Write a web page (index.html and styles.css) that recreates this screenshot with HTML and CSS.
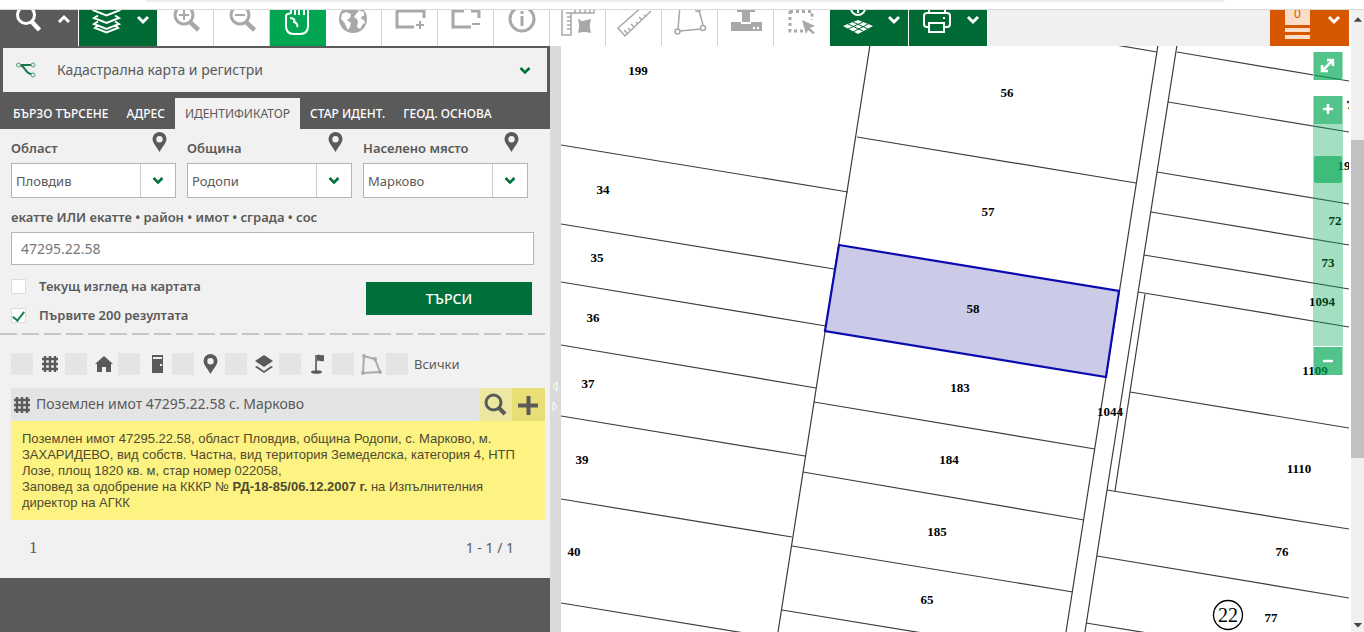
FILE: index.html
```html
<!DOCTYPE html>
<html lang="bg">
<head>
<meta charset="utf-8">
<meta name="viewport" content="width=device-width, initial-scale=1">
<title>Кадастрална карта и регистри</title>
<link rel="stylesheet" href="styles.css">
</head>
<body>
<svg class="defs" aria-hidden="true">
  <symbol id="pin" viewBox="0 0 14 20"><path fill-rule="evenodd" d="M7 0a7 7 0 0 1 7 7c0 4-4.500 8-7 13C4.500 15 0 11 0 7a7 7 0 0 1 7-7zm0 4a3.200 3.200 0 1 0 0 6.400A3.200 3.200 0 0 0 7 4z"/></symbol>
  <symbol id="down" viewBox="0 0 12 9"><path d="M1.500 2 6 6.500 10.500 2" fill="none" stroke="currentColor" stroke-width="2.600"/></symbol>
  <symbol id="hash" viewBox="0 0 16 16"><path d="M3 0v16M8 0v16M13 0v16M0 3h16M0 8h16M0 13h16" stroke="currentColor" stroke-width="2.400" fill="none"/></symbol>
</svg>
<div class="strip"><div class="strip-bar"></div></div>
<div class="app">
  <header class="toolbar">
    <button class="tool wide dark" aria-label="Търсене"><svg viewBox="0 0 78 36"><circle cx="26" cy="5" r="8.500" class="s3"/><path d="m32 12 7.500 8" stroke-width="4.500"/><path d="m59 12 5-5 5 5" class="s3"/></svg></button>
    <button class="tool wide green" aria-label="Слоеве"><svg viewBox="0 0 78 36"><path class="s2" d="M19-2l-4 2.500 12.500 5L40 .5 36-2M19 5.500l-4 2.500 12.500 5L40 8l-4-2.500M19 11.500l-4 2.500 12.500 5L40 14l-4-2.500M19 15.500l-3 2.500 11.500 4.500L39 18l-3-2.500"/><path d="m59 7 5 5 5-5" class="s3"/></svg></button>
    <button class="tool" aria-label="Увеличаване"><svg viewBox="0 0 56 36"><circle cx="26" cy="5" r="9" class="s3"/><path d="m32 12 8.500 8" stroke-width="4.500"/><path d="M21 5h10M26 0v10" class="s2"/></svg></button>
    <button class="tool" aria-label="Намаляване"><svg viewBox="0 0 56 36"><circle cx="26" cy="5" r="9" class="s3"/><path d="m32 12 8.500 8" stroke-width="4.500"/><path d="M21 5h10" class="s2"/></svg></button>
    <button class="tool active" aria-label="Местене"><svg viewBox="0 0 56 36"><path class="s2" d="M21-2v5c0 1-5 0-5 3v10c0 5 3 8 8 8h6c5 0 8-3 8-8V-2M25-2v7M29-2v7M34-2v7M20 8c4 0 5 2 4 4 3 1 4 3 3 5"/></svg></button>
    <button class="tool" aria-label="Цяла карта"><svg viewBox="0 0 56 36"><circle cx="27" cy="9" r="14" fill="currentColor" stroke="none"/><path fill="#fff" stroke="none" d="M16 4l4-2 5 2-1 4-3 2 4 3-1 4-2 3-4-8-3-3zM29-1l4 2-3 3-2 3 3 2 1 3-1 5 3 2 3-5 2-1-1-3-3-1 1-3 2 0 0-4-3-1z"/></svg></button>
    <button class="tool" aria-label="Добави изглед"><svg viewBox="0 0 56 36"><path class="s3" d="M15 1v16h17M14 1h28V8"/><path class="s2" d="M34 15h8M38 11v8"/></svg></button>
    <button class="tool" aria-label="Премахни изглед"><svg viewBox="0 0 56 36"><path class="s3" d="M15 0v17h18M14 1h12M33 1h8V8"/><path class="s2" d="M34 14h8"/></svg></button>
    <button class="tool" aria-label="Информация"><svg viewBox="0 0 56 36"><circle cx="28" cy="9" r="12" class="s3"/><path class="s3" d="M28 6v10M28 1v3"/></svg></button>
    <button class="tool" aria-label="Площ"><svg viewBox="0 0 56 36"><path d="M12-2v27h9V3h23V-2M16 3h28M17 7h4M17 11h4M17 15h4M17 19h4M25 3v-4M30 3v-4M35 3v-4M40 3v-4"/><path fill="currentColor" d="m29 10 3 2 4-1 4-1-1 6 1 6-6-1-5 1 1-6z"/></svg></button>
    <button class="tool" aria-label="Разстояние"><svg viewBox="0 0 56 36"><path d="M37-4 12 18l7 8L45 1M21 23l-3-3M24 20l-2-2M28 17l-3-3M32 14l-2-2M36 10l-3-3M40 7l-2-2"/></svg></button>
    <button class="tool" aria-label="Полигон"><svg viewBox="0 0 56 36"><path d="m18-4-2 23M18 21l21-2M41 15 36-3"/><circle cx="15.500" cy="21.500" r="2.500"/><circle cx="41" cy="18" r="2.500"/><circle cx="36" cy="-1" r="2.500"/></svg></button>
    <button class="tool" aria-label="Щемпел"><svg viewBox="0 0 56 36"><path fill="currentColor" stroke="none" d="M19 0h18v2h-5v10h-8V2h-5zM13 12h10v2h10v-2h11v9H13z"/><circle cx="36" cy="18" r="1.200" fill="#fff" stroke="none"/><circle cx="40" cy="18" r="1.200" fill="#fff" stroke="none"/></svg></button>
    <button class="tool last" aria-label="Избор"><svg viewBox="0 0 56 36"><path class="s3" stroke-dasharray="3 3" d="M16 1v20h14M16 1.500h22V10"/><path fill="currentColor" stroke="none" d="m28 10 13 6-5 2 5 5-2 1-5-4-2 4z"/></svg></button>
    <button class="tool wide green" aria-label="Кадастрална основа"><svg viewBox="0 0 78 36"><circle cx="28" cy="-2" r="7" class="s2"/><path class="s2" d="M28-2v5"/><path fill="currentColor" stroke="none" d="m28 10 15 6-15 8-15-8z"/><path stroke="#006a35" stroke-width="1" d="m18 14 15 7M23 12l15 7M18 19l15-7M23 22l15-8"/><path d="m59 7 5 5 5-5" class="s3"/></svg></button>
    <button class="tool wide green" aria-label="Печат"><svg viewBox="0 0 78 36"><path class="s2" d="M20 17h-2c-2 0-3-1-3-3V6c0-2 1-3 3-3h20c2 0 3 1 3 3v8c0 2-1 3-3 3h-2M20 3v-6M36 3v-6M20 13h15v9H20z"/><path class="s2" d="M34 8h2"/><path d="m59 7 5 5 5-5" class="s3"/></svg></button>
    <span class="spacer"></span>
    <button class="tool wide orange" aria-label="Кошница"><span class="count">0</span><svg viewBox="0 0 78 36"><path d="M15 20h25M15 27h25" stroke-width="4" stroke="#fbdcc6"/><path d="m59 7 5 5 5-5" class="s3"/></svg></button>
  </header>

  <div class="workspace">
    <aside class="sidebar">
      <button class="service">
        <svg class="service-logo" viewBox="0 0 20 16"><path d="M4 3h12M3 3c7 0 5 9 13 9" fill="none" stroke="#16794a" stroke-width="2"/><circle cx="2.500" cy="3" r="2" /><circle cx="17" cy="3" r="2"/><circle cx="17" cy="13" r="2"/></svg>
        <span class="service-name">Кадастрална карта и регистри</span>
        <svg class="chev"><use href="#down"/></svg>
      </button>
      <nav class="tabs">
        <a href="#quick">БЪРЗО ТЪРСЕНЕ</a><a href="#address">АДРЕС</a><a href="#id" class="current" aria-current="page">ИДЕНТИФИКАТОР</a><a href="#old">СТАР ИДЕНТ.</a><a href="#geo">ГЕОД. ОСНОВА</a>
      </nav>
      <div class="panel">
        <form class="search">
          <div class="places">
            <div class="place"><div class="place-head"><label for="region">Област</label><svg class="pin"><use href="#pin"/></svg></div>
              <div class="picker"><select id="region"><option>Пловдив</option></select><svg class="chev"><use href="#down"/></svg></div></div>
            <div class="place"><div class="place-head"><label for="town">Община</label><svg class="pin"><use href="#pin"/></svg></div>
              <div class="picker"><select id="town"><option>Родопи</option></select><svg class="chev"><use href="#down"/></svg></div></div>
            <div class="place"><div class="place-head"><label for="village">Населено място</label><svg class="pin"><use href="#pin"/></svg></div>
              <div class="picker"><select id="village"><option>Марково</option></select><svg class="chev"><use href="#down"/></svg></div></div>
          </div>
          <label class="id-label" for="ident">екатте ИЛИ екатте • район • имот • сграда • сос</label>
          <input class="ident" id="ident" type="text" value="47295.22.58">
          <div class="options">
            <div class="checks">
              <label><input type="checkbox">Текущ изглед на картата</label>
              <label><input type="checkbox" checked>Първите 200 резултата</label>
            </div>
            <button class="submit" type="button">ТЪРСИ</button>
          </div>
        </form>
        <div class="divider"></div>
        <div class="filters">
          <div class="filter-set">
            <label><input type="checkbox" aria-label="Имоти"><svg viewBox="0 0 22 22"><use href="#hash" x="3" y="3" width="16" height="16"/></svg></label>
            <label><input type="checkbox" aria-label="Сгради"><svg viewBox="0 0 22 22"><path d="M11 3 2 11h2v8h5v-5h4v5h5v-8h2l-9-8z"/></svg></label>
            <label><input type="checkbox" aria-label="Обекти"><svg viewBox="0 0 22 22"><path fill-rule="evenodd" d="M6 2h11v18H6zm1 2v2h9V4zm7 7v2h2v-2z"/></svg></label>
            <label><input type="checkbox" aria-label="Точки"><svg viewBox="0 0 22 22"><use href="#pin" x="3" y="1" width="15" height="20"/></svg></label>
            <label><input type="checkbox" aria-label="Слоеве"><svg viewBox="0 0 22 22"><path d="m11 2 9 6-9 6-9-6z"/><path d="m2 14 2-1 7 5 7-5 2 1-9 6z"/></svg></label>
            <label><input type="checkbox" aria-label="Геодезични точки"><svg viewBox="0 0 22 22"><path d="M9 2h1c3-1 4 1 7 0v6c-3 1-4-1-7 0v10h-1z"/><path d="M9 2v17" stroke="#777" stroke-width="2"/><ellipse cx="9.500" cy="19" rx="5.500" ry="1.800"/></svg></label>
            <label><input type="checkbox" aria-label="Полигони"><svg viewBox="0 0 22 22" class="outline"><path d="M4 3 3 20l17-1-5-13z"/><circle cx="4" cy="3" r="1"/><circle cx="15" cy="6" r="1"/><circle cx="3" cy="20" r="1"/><circle cx="20" cy="19" r="1"/></svg></label>
          </div>
          <label class="all"><input type="checkbox">Всички</label>
        </div>
        <article class="result">
          <div class="result-head">
            <svg class="hash"><use href="#hash"/></svg>
            <h2>Поземлен имот 47295.22.58 с. Марково</h2>
            <button class="find" aria-label="Покажи"><svg viewBox="0 0 33 33"><circle cx="14.500" cy="14.500" r="7.500"/><path d="m20 20 6 6" stroke-width="4"/></svg></button>
            <button class="add" aria-label="Добави"><svg viewBox="0 0 33 33"><path d="M6 17.500h20M16.500 8v19" stroke-width="4"/></svg></button>
          </div>
          <div class="result-text">
            <p>Поземлен имот 47295.22.58, област Пловдив, община Родопи, с. Марково, м. ЗАХАРИДЕВО, вид собств. Частна, вид територия Земеделска, категория 4, НТП Лозе, площ 1820 кв. м, стар номер 022058,</p>
            <p>Заповед за одобрение на КККР № <b>РД-18-85/06.12.2007 г.</b> на Изпълнителния директор на АГКК</p>
          </div>
        </article>
        <div class="pager"><span class="page">1</span><span>1 - 1 / 1</span></div>
      </div>
    </aside>
    <div class="splitter"><svg viewBox="0 0 11 30"><path d="M7 1v9L3 5.500zM3 21v9l4-4.500z"/></svg></div>
    <main class="map">
      <svg class="parcels" viewBox="561 46 788 586" preserveAspectRatio="xMinYMin slice">
        <g class="edges">
          <path d="M870 45 778 632M1158 45 1066 632M1177 45 1138 293 1107 490 1085 632M1145 294 1130 392 1115 491"/>
          <path d="M561 145 848 192M561 224 834 269M561 282 826 326M561 345 816 388M561 416 805 456M561 499 792 537M561 603 775 638"/>
          <path d="M1110 44 1157 52M857 137 1136 183M814 402 1095 449M803 472 1084 520M792 546 1073 592M782 610 1063 656"/>
          <path d="M1177 52 1349 81M1168 102 1349 132M1157 172 1349 204M1151 212 1349 245M1144 255 1349 289M1138 292 1349 327M1130 392 1349 428M1107 490 1349 529M1097 556 1349 598M1086 623 1160 635"/>
        </g>
        <path class="selected" d="M839 245 1119 291 1106 377 825 331z"/>
        <g class="numbers">
          <text x="638" y="75">199</text><text x="1007" y="97">56</text><text x="603" y="194">34</text><text x="988" y="216">57</text>
          <text x="597" y="262">35</text><text x="973" y="313">58</text><text x="593" y="322">36</text><text x="588" y="388">37</text>
          <text x="960" y="392">183</text><text x="1110" y="416">1044</text><text x="582" y="464">39</text><text x="949" y="464">184</text>
          <text x="574" y="556">40</text><text x="937" y="536">185</text><text x="927" y="604">65</text><text x="1335" y="225">72</text>
          <text x="1328" y="267">73</text><text x="1322" y="306">1094</text><text x="1315" y="375">1109</text><text x="1299" y="473">1110</text>
          <text x="1282" y="556">76</text><text x="1271" y="622">77</text><text x="1344" y="170">19</text><text x="1353" y="109">71</text>
        </g>
        <circle cx="1228" cy="615" r="14.500" class="ring"/>
        <text x="1228" y="622" class="district">22</text>
      </svg>
      <div class="zoom">
        <button class="full" aria-label="Цял екран"><svg viewBox="0 0 28 28"><path d="m9 18 9-9M13 8h6v6M8 13v6h6"/></svg></button>
        <button aria-label="Приближи"><svg viewBox="0 0 28 28"><path d="M9 13h10M14 8v10"/></svg></button>
        <div class="track"><div class="handle"></div></div>
        <button aria-label="Отдалечи"><svg viewBox="0 0 28 28"><path d="M9 14h10"/></svg></button>
      </div>
    </main>
  </div>
</div>
<div class="scrollbar"><svg viewBox="0 0 14 20"><path d="M3 12h9L7.500 7z"/></svg><div class="rail"><div class="thumb"></div></div><svg viewBox="0 0 14 20"><path d="M3 11h9l-4.500 5z"/></svg></div>
</body>
</html>
```
FILE: styles.css
```css
* { box-sizing: border-box; }
body {
  margin: 0;
  min-height: 100vh;
  display: grid;
  grid-template: 10px 1fr / 1fr 15px;
  font: 14px/20px "Noto Sans", "Open Sans", sans-serif;
  color: #5a5a5a;
  background: #fff;
}
button { border: 0; padding: 0; margin: 0; font: inherit; color: inherit; background: none; display: block; }
svg { display: block; }
.defs { position: absolute; width: 0; height: 0; }

.strip { grid-column: 1 / -1; border-bottom: 1px solid #d9d9d9; }
.strip-bar { height: 2px; margin: 0 139px 0 145px; background: #ededf3; border-radius: 0 0 6px 6px; }
.app { display: flex; flex-direction: column; min-width: 0; }

.toolbar { display: flex; height: 36px; background: #f0f0f0; overflow: hidden; }
.tool { flex: 0 0 56px; height: 36px; background: #fff; color: #a8a8a8; border-right: 1px solid #d2d2d2; overflow: hidden; }
.tool svg { width: 56px; height: 36px; fill: none; stroke: currentColor; stroke-width: 1.5; }
.tool .s2 { stroke-width: 2; }
.tool .s3 { stroke-width: 3; }
.wide { flex-basis: 79px; color: #fff; border-right-color: #fff; }
.wide svg { width: 78px; }
.dark { background: #5a5a5a; }
.green { background: #006a35; }
.active { background: #00a651; color: #fff; border-right-color: #00a651; }
.last { border-right-color: #fff; }
.spacer { flex: 1; }
.orange { background: #d65700; border: 0; position: relative; }
.count { position: absolute; left: 15px; top: 0; width: 25px; height: 15px; background: #fbdcc6; color: #d65700; font-size: 12px; line-height: 8px; }

.workspace { flex: 1; display: grid; grid-template-columns: 550px 11px minmax(0, 1fr); }
.sidebar { background: #5a5a5a; }
.service { display: flex; align-items: center; width: auto; min-width: calc(100% - 6px); height: 44px; margin: 2px 3px 6px; padding: 0 16px 0 13px; background: #f1f1f1; text-align: left; }
.service-logo { width: 20px; height: 16px; fill: #f1f1f1; stroke: #4f9c77; margin-right: 21px; }
.service-name { flex: 1; }
.chev { width: 12px; height: 9px; color: #00703a; }

.tabs { display: flex; height: 31px; padding-left: 4px; font-size: 12px; line-height: 31px; font-weight: 500; }
.tabs a { color: #fff; text-decoration: none; padding: 0 9px; white-space: nowrap; }
.tabs .current { background: #f1f1f1; color: #5a5a5a; font-weight: 400; padding: 0 10px; margin: 0 1px; }

.panel { background: #f1f1f1; padding-bottom: 20px; }
.search { padding: 0 16px 0 11px; font-size: 13px; font-weight: 600; }
.places { display: grid; grid-template-columns: repeat(3, 165px); gap: 11px; }
.place-head { display: flex; justify-content: space-between; height: 34px; padding: 3px 9px 0 0; }
.place-head label { padding-top: 6px; }
.pin { width: 15px; height: 20px; fill: #5a5a5a; }
.picker { position: relative; }
.picker select { appearance: none; width: 100%; height: 35px; border: 1px solid #b5b5b5; border-radius: 0; padding: 0 40px 0 4px; font: 13px "Noto Sans", "Open Sans", sans-serif; color: #5a5a5a; background: linear-gradient(#ccc, #ccc) 128px 0 / 1px 100% no-repeat #fff; }
.picker .chev { position: absolute; right: 12px; top: 13px; pointer-events: none; }
.id-label { display: block; margin: 9px 0 5px; }
.ident { display: block; width: 523px; height: 33px; border: 1px solid #b5b5b5; padding: 0 9px; font: 14px "Noto Sans", "Open Sans", sans-serif; color: #777; background: #fff; }
.options { display: flex; justify-content: space-between; align-items: flex-start; padding: 11px 2px 0 0; }
.checks { display: grid; gap: 9px; }
.checks label { display: flex; align-items: center; }
.checks input { appearance: none; width: 15px; height: 15px; margin: 0 13px 0 0; border: 1px solid #dcdcdc; background: #fff; display: grid; place-items: center; }
.checks input:checked::after { content: ""; width: 5px; height: 10px; border: solid #1b8350; border-width: 0 2px 2px 0; transform: rotate(38deg); }
.submit { width: 166px; height: 33px; margin-top: 6px; background: #00703a; color: #fff; font-size: 14px; font-weight: 500; line-height: 32px; }
.divider { height: 2px; margin: 8px 5px 18px 0; background: repeating-linear-gradient(90deg, #c6c6c6 0 17px, transparent 17px 22px); }

.filters { display: flex; align-items: center; padding-left: 11px; font-size: 13px; height: 22px; }
.filter-set { display: grid; grid-template-columns: repeat(7, 1fr); width: 375px; }
.filters label { display: flex; align-items: center; }
.filters input { appearance: none; flex: none; width: 22px; height: 22px; margin: 0; background: #e4e4e4; }
.filters svg { width: 22px; height: 22px; margin-left: 6px; fill: #5a5a5a; }
.filters .outline { fill: none; stroke: #aaa; stroke-width: 2; }
.filters .all input { margin-right: 6px; }

.result { margin: 13px 5px 0 11px; }
.result-head { display: flex; align-items: center; height: 33px; background: #e4e4e4; padding-left: 3px; }
.result-head .hash { width: 16px; height: 16px; }
.result-head h2 { flex: 1; margin: 0 0 0 6px; font-size: 14px; font-weight: 400; line-height: 31px; align-self: flex-start; }
.result-head button { width: 33px; height: 33px; }
.result-head button svg { width: 33px; height: 33px; fill: none; stroke: #5a5a5a; stroke-width: 3; }
.find { background: #ece8a2; }
.add { background: #e7df75; }
.result-text { background: #fdf383; padding: 10px 11px 9px; font: 13px/16px "Liberation Sans", Arial, sans-serif; color: #4d4a30; }
.result-text p { margin: 0; }
.pager { display: flex; justify-content: space-between; margin-top: 18px; padding: 0 36px 0 29px; }
.page { font: 17px/20px "Liberation Serif", serif; }

.splitter { background: #dadada; padding-top: 335px; }
.splitter svg { width: 11px; height: 30px; fill: none; stroke: #fff; }

.map { position: relative; overflow: hidden; min-height: 586px; }
.parcels { position: absolute; inset: 0; width: 100%; height: 100%; }
.edges { fill: none; stroke: #3c3c3c; stroke-width: 1.2; }
.selected { fill: #cbcbe8; stroke: #0a0ab0; stroke-width: 2.2; }
.numbers { font: bold 13px "Liberation Serif", serif; text-anchor: middle; fill: #000; }
.ring { fill: none; stroke: #000; stroke-width: 1.3; }
.district { font: 20px "Liberation Serif", serif; text-anchor: middle; fill: #000; }
.zoom { position: absolute; right: 6px; top: 6px; width: 30px; color: #fff; }
.zoom button { width: 30px; height: 28px; border: solid #a3ddbf; border-width: 0 1px; background: rgba(0, 166, 81, .68); }
.zoom button svg { width: 28px; height: 28px; fill: none; stroke: #fff; stroke-width: 2.5; }
.zoom .full { margin-bottom: 16px; }
.track { height: 223px; padding: 32px 1px 0; background: rgba(0, 166, 81, .36); border-bottom: 1px solid #fff; }
.handle { height: 27px; background: rgba(0, 166, 81, .62); border-radius: 2px; }

.scrollbar { display: flex; flex-direction: column; background: #f0f0f0; border-left: 2px solid #fff; }
.scrollbar svg { width: 13px; height: 20px; fill: #444; }
.rail { flex: 1; padding-top: 110px; }
.thumb { height: 318px; background: #c1c1c1; }
```
